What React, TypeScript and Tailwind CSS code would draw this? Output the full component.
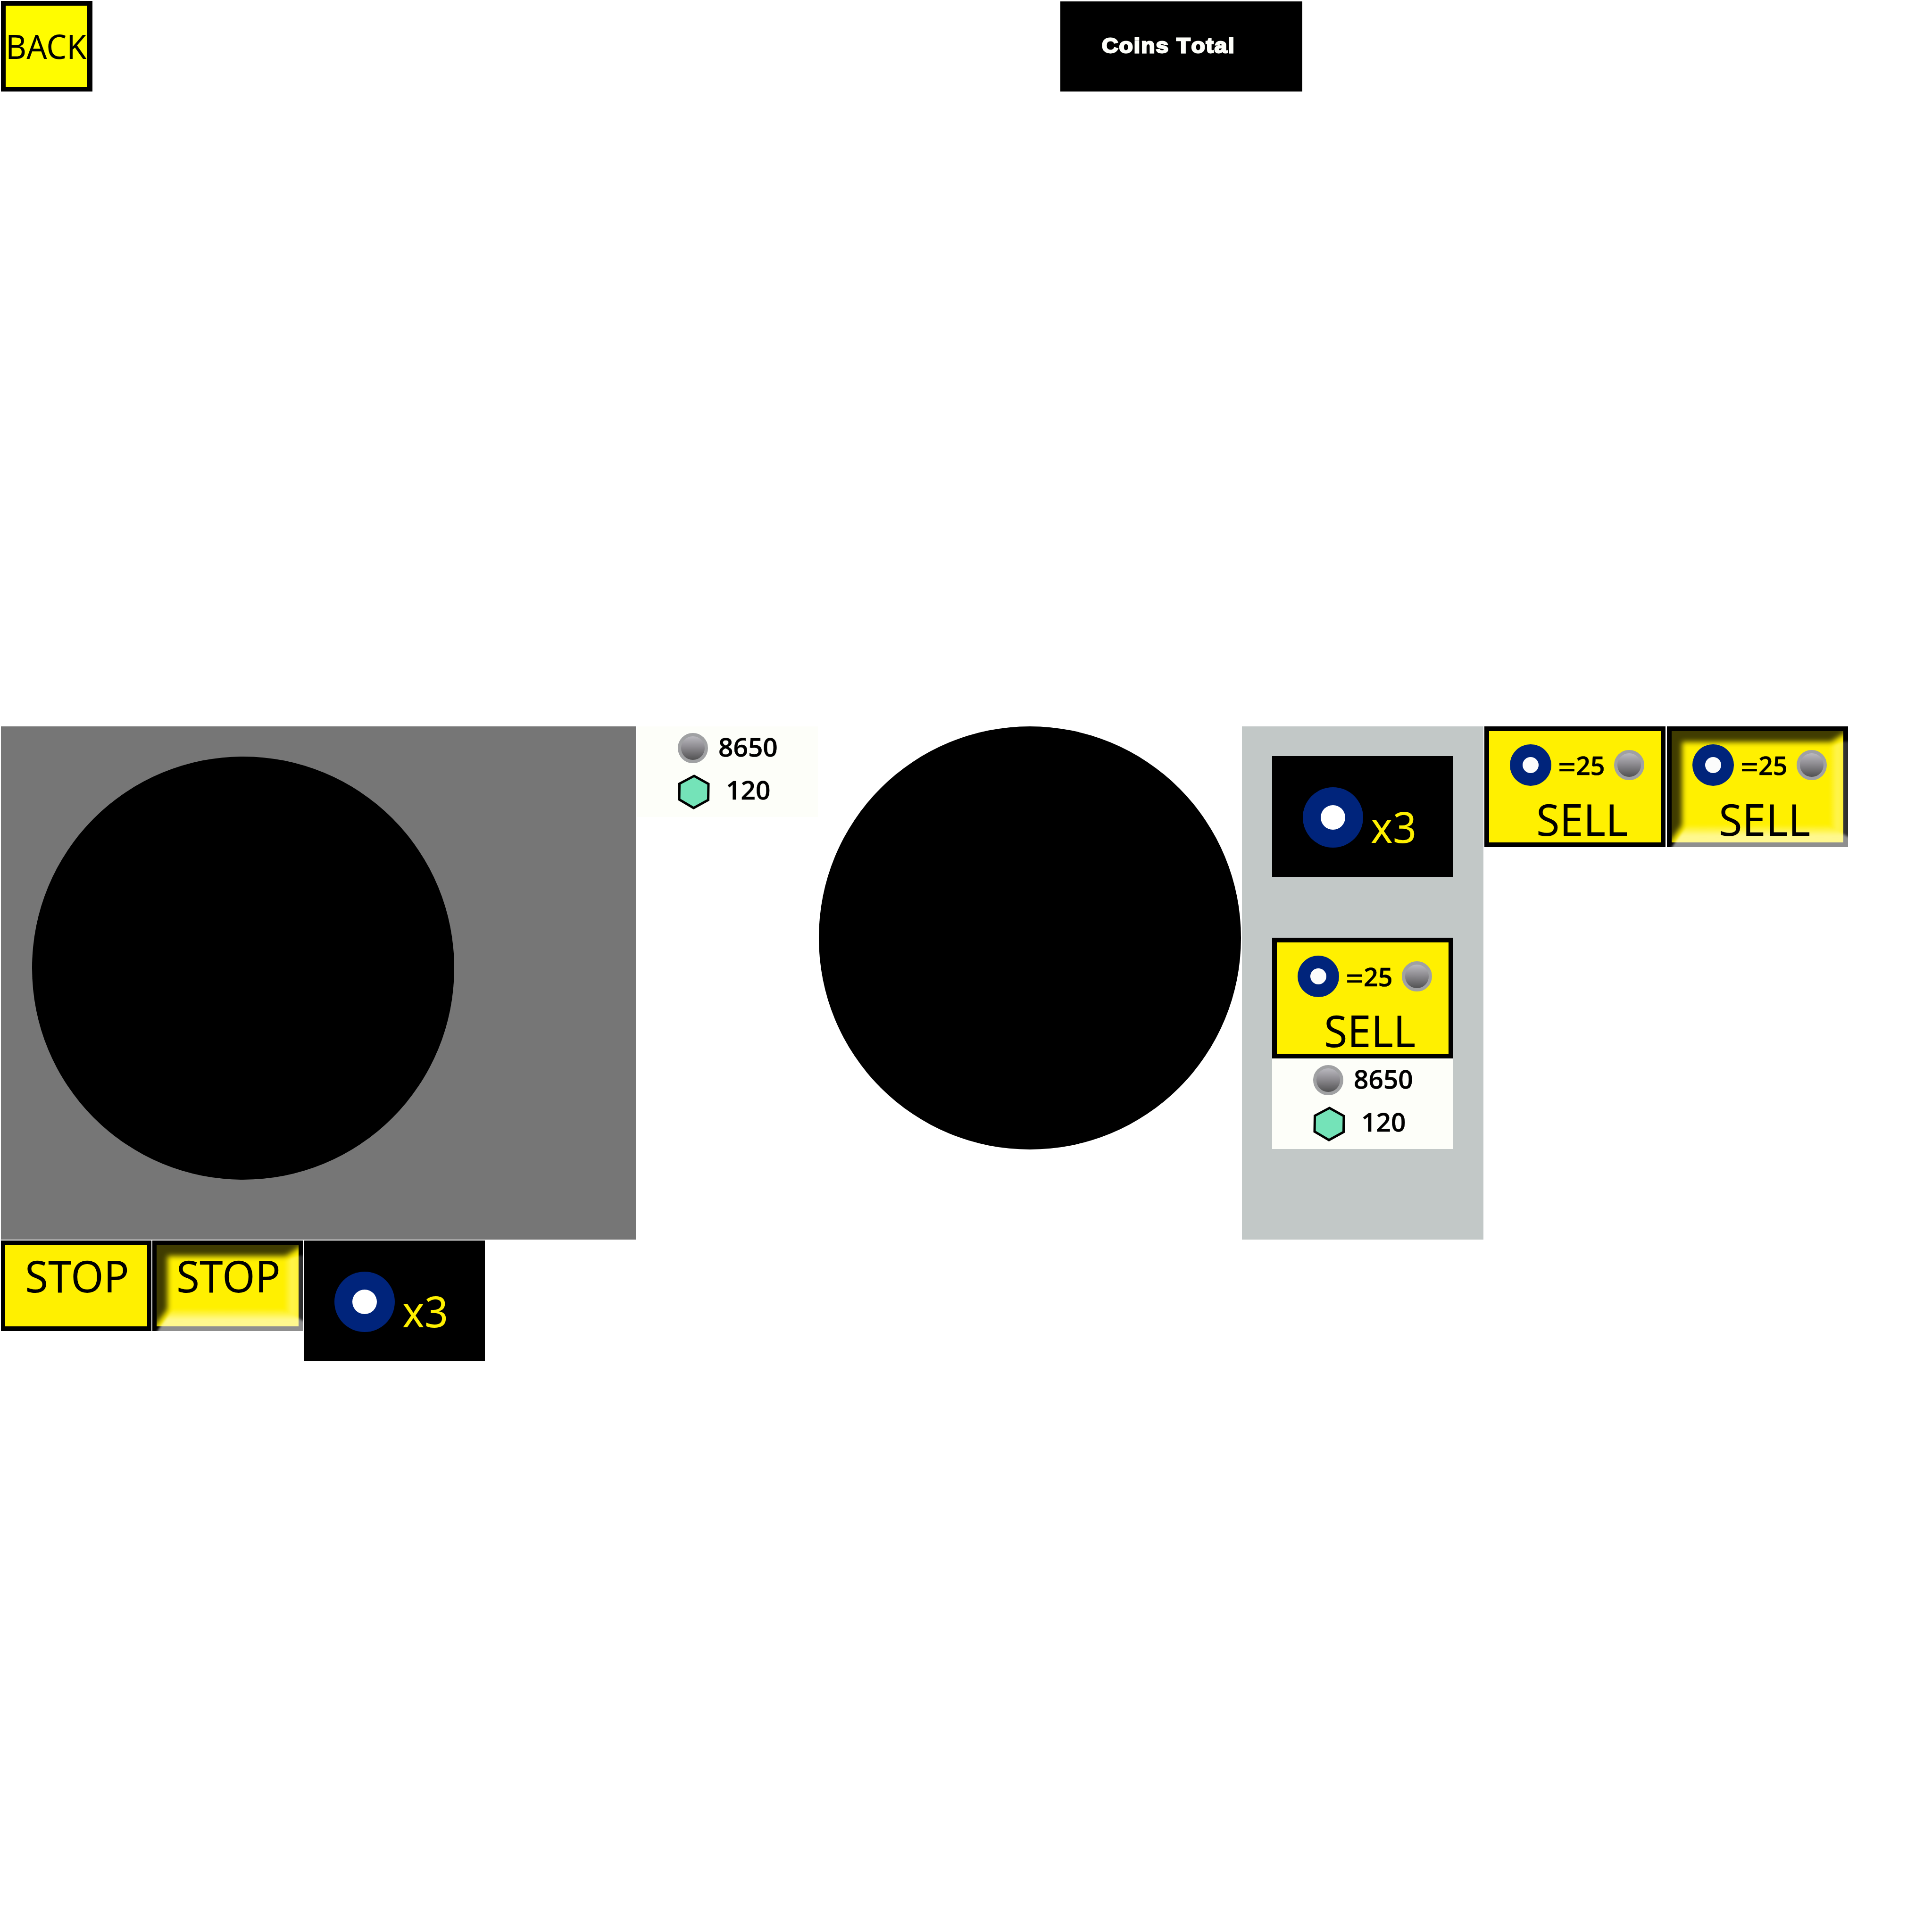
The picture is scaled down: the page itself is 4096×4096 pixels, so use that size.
import type { ReactNode } from "react";

function Coin({ className }: { className: string }) {
  return (
    <div
      className={`size-16 shrink-0 rounded-full border-[7px] border-[#a0a1a3] bg-[linear-gradient(#bab9bf,#8e8c91_45%,#525253)] bg-origin-padding ${className}`}
    />
  );
}

function Counter({ className }: { className: string }) {
  return (
    <div className={`relative h-48 w-96 bg-[#fdfef9] font-['Open_Sans',sans-serif] text-[55px] font-semibold text-black ${className}`}>
      <div className="flex h-[90px] pl-[87px] pt-[14px]">
        <Coin className="" />
        <span className="ml-[22px] mt-[9px] block h-10 whitespace-nowrap leading-10 [-webkit-text-stroke:0.5px_#000]">8650</span>
      </div>
      <div className="flex pl-[87px] pt-3">
        <svg className="h-[74px] w-[68px] shrink-0" viewBox="0 0 68 74">
          <path d="M34.5 3 L65 20 L64.500 54 L33.500 71 L3 53 L3.500 19.500 Z" fill="#74e3b8" stroke="#000" strokeWidth="5" />
        </svg>
        <span className="ml-[34px] mt-[12px] block h-10 whitespace-nowrap leading-10 [-webkit-text-stroke:0.5px_#000]">120</span>
      </div>
    </div>
  );
}

function Tokens({ className }: { className: string }) {
  return (
    <div className={`flex h-64 w-96 bg-black pl-[65px] pt-[66px] ${className}`}>
      <div className="size-32 shrink-0 rounded-full bg-[#00247b] p-[38px]">
        <div className="size-full rounded-full bg-white" />
      </div>
      <span className="ml-4 mt-[49px] block h-[67px] origin-left scale-x-[0.96] whitespace-nowrap font-['Noto_Sans',sans-serif] text-[92px] leading-[67px] text-[#fff000]">
        x3
      </span>
    </div>
  );
}

function Bevel({ w, h, id }: { w: number; h: number; id: string }) {
  return (
    <svg className="absolute inset-0 size-full" viewBox={`0 0 ${w} ${h}`} preserveAspectRatio="none">
      <defs>
        <linearGradient id={`${id}-b`} gradientUnits="userSpaceOnUse" x1="0" x2="0" y1={h - 48} y2={h - 24}>
          <stop offset="0" stopColor="#fff" stopOpacity="0" />
          <stop offset="1" stopColor="#fff" stopOpacity="0.56" />
        </linearGradient>
        <linearGradient id={`${id}-r`} gradientUnits="userSpaceOnUse" x1={w - 40} x2={w} y1="0" y2="0">
          <stop offset="0" stopColor="#fff" stopOpacity="0" />
          <stop offset="0.4" stopColor="#fff" stopOpacity="0.3" />
          <stop offset="1" stopColor="#fff" stopOpacity="0.16" />
        </linearGradient>
        <filter id={`${id}-s`} filterUnits="userSpaceOnUse" x="-60" y="-60" width={w + 120} height={h + 120} colorInterpolationFilters="sRGB">
          <feGaussianBlur stdDeviation="6" />
        </filter>
        <filter id={`${id}-t`} filterUnits="userSpaceOnUse" x="-60" y="-60" width={w + 120} height={h + 120} colorInterpolationFilters="sRGB">
          <feGaussianBlur stdDeviation="2.500" />
        </filter>
      </defs>
      <g filter={`url(#${id}-t)`}>
        <path d={`M${w - 44} 44 L${w - 10} 32 H${w + 50} V${h - 10} L${w} ${h - 22} L${w - 44} ${h - 48} Z`} fill={`url(#${id}-r)`} />
        <path d={`M44 ${h - 48} L14 ${h - 6} L0 ${h + 20} V${h + 50} H${w + 50} V${h - 6} L${w} ${h - 22} L${w - 44} ${h - 48} Z`} fill={`url(#${id}-b)`} />
      </g>
      <path
        d={`M-50 -50 H${w + 50} V-10 L${w} 10 L${w - 36} 33 H32 V${h - 46} L4 ${h - 8} L-50 ${h + 30} Z`}
        fill="#000"
        fillOpacity="0.75"
        filter={`url(#${id}-s)`}
      />
    </svg>
  );
}

function Sell({ className, children }: { className: string; children?: ReactNode }) {
  return (
    <div className={`relative h-64 w-96 shrink-0 bg-black p-[10px] ${className}`}>
      <div className="size-full bg-[#fff000]" />
      {children}
      <div className="absolute inset-0">
        <div className="flex pl-[54px] pt-[38px]">
          <div className="size-[88px] shrink-0 rounded-full bg-[#00247b] p-[27px]">
            <div className="size-full rounded-full bg-[#fcfcfc]" />
          </div>
          <span className="ml-[17px] mt-[39px] flex h-4 w-8 shrink-0 scale-x-[1.1] justify-center font-['Noto_Sans',sans-serif] text-[62px] leading-4 text-black [-webkit-text-stroke:0.5px_#000]">
            =
          </span>
          <span className="ml-[3px] mt-[24px] block h-10 w-[60px] origin-left scale-x-[0.98] whitespace-nowrap font-['Open_Sans',sans-serif] text-[55px] font-semibold leading-10 text-black [-webkit-text-stroke:0.5px_#000]">
            25
          </span>
          <Coin className="ml-[21px] mt-3" />
        </div>
        <div className="ml-[110px] mt-[37px] h-[67px] w-[202px] origin-left scale-x-[0.96] whitespace-nowrap font-['Noto_Sans',sans-serif] text-[94px] leading-[67px] text-black">
          SELL
        </div>
      </div>
    </div>
  );
}

function Stop({ className, children }: { className: string; children?: ReactNode }) {
  return (
    <div className={`relative h-48 w-[319px] shrink-0 bg-black px-[9px] py-[10px] ${className}`}>
      <div className="size-full bg-[#fff000]" />
      {children}
      <div className="absolute inset-0 pl-[51px] pt-[41px]">
        <div className="h-[67px] w-[234px] origin-left scale-x-[0.95] whitespace-nowrap font-['Noto_Sans',sans-serif] text-[94px] leading-[67px] text-black">
          STOP
        </div>
      </div>
    </div>
  );
}

export default function App() {
  return (
    <div className="flex h-[4096px] w-[4096px] flex-col overflow-hidden bg-white pl-[2px] pt-[2px]">
      <header className="flex h-[1538px] items-start">
        <div className="h-48 w-[194px] border-[10px] border-r-[12px] border-black bg-[#fffc00] pt-[60px]">
          <div className="h-[51px] w-[172px] origin-left scale-x-[0.957] whitespace-nowrap font-['Noto_Sans',sans-serif] text-[71px] leading-[51px] text-black">
            BACK
          </div>
        </div>
        <div className="ml-[2052px] mt-px h-[191px] w-[513px] bg-black pl-[88px] pt-[77px]">
          <div className="h-[34px] w-[260px] origin-left scale-x-[1.09] whitespace-nowrap font-['Liberation_Sans',sans-serif] text-[44px] font-bold leading-[34px] tracking-[1.8px] text-[#fdfef9] [-webkit-text-stroke:2.8px_#fdfef9] [font-kerning:none]">
            Coins Total
          </div>
        </div>
      </header>
      <main className="flex h-[1090px] items-start">
        <section className="h-[1088px] w-[1346px] shrink-0 bg-[#767676] pl-[66px] pt-16">
          <div className="h-[897px] w-[895px] rounded-full bg-black" />
        </section>
        <Counter className="ml-[2px] shrink-0" />
        <div className="ml-[2px] h-[897px] w-[895px] shrink-0 rounded-full bg-black" />
        <section className="ml-[2px] h-[1088px] w-[512px] shrink-0 bg-[#c2c8c7] pl-16 pt-[63px]">
          <Tokens className="" />
          <Sell className="mt-[129px]" />
          <Counter className="" />
        </section>
        <Sell className="ml-[2px]" />
        <Sell className="ml-[3px]">
          <Bevel w={384} h={256} id="sell" />
        </Sell>
      </main>
      <footer className="flex items-start">
        <Stop className="" />
        <Stop className="ml-[2px]">
          <Bevel w={319} h={192} id="stop" />
        </Stop>
        <Tokens className="ml-[2px]" />
      </footer>
    </div>
  );
}
